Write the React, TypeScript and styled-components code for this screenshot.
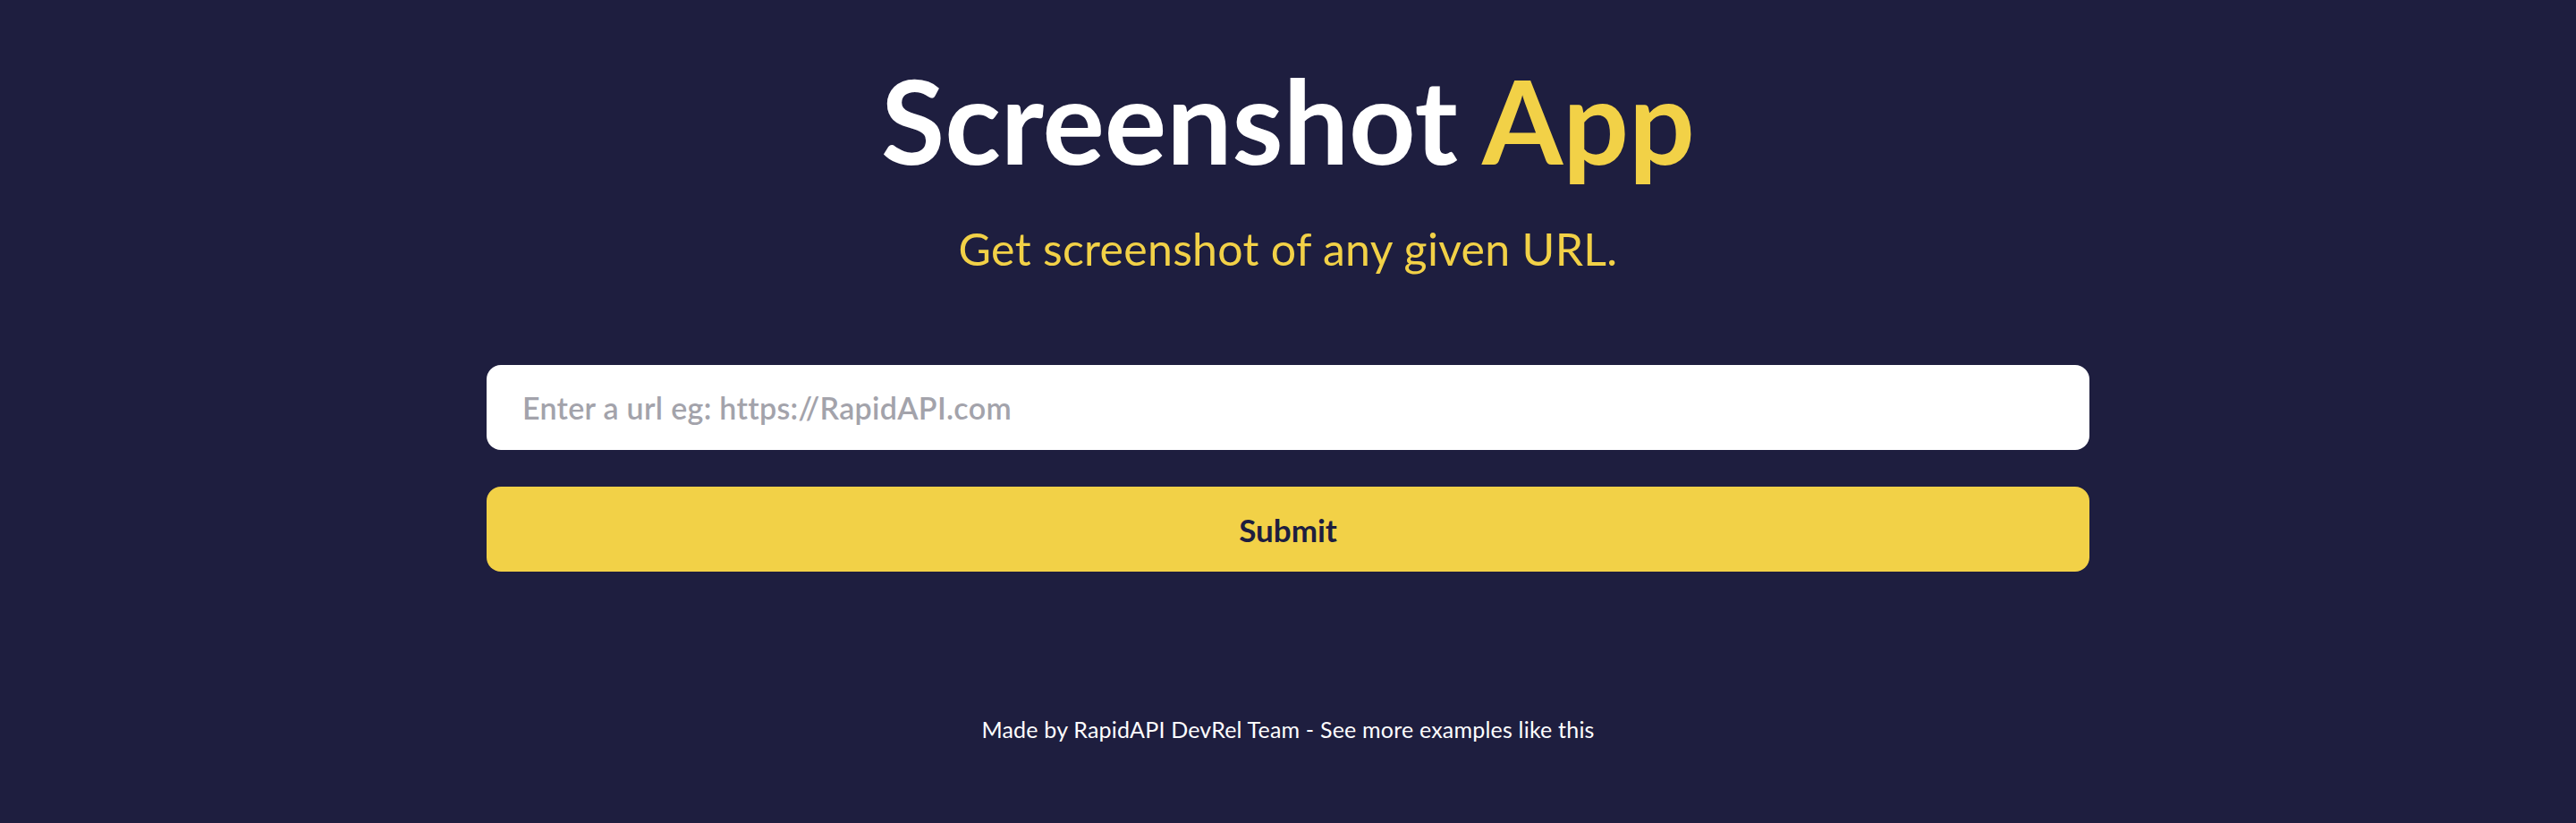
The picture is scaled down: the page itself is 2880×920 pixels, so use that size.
import styled, { createGlobalStyle } from 'styled-components';

const GlobalStyle = createGlobalStyle`
  html, body {
    margin: 0;
    padding: 0;
    background: #1e1e3f;
  }
  body {
    font-family: Lato, 'Noto Sans', sans-serif;
  }
`;

const Page = styled.div`
  min-height: 920px;
  display: flex;
  flex-direction: column;
  align-items: center;
  background: #1e1e3f;
`;

const Title = styled.h1`
  margin: 56px 0 0;
  font-size: 130px;
  line-height: 1.2;
  font-weight: 700;
  color: #ffffff;

  span {
    color: #f2d147;
  }
`;

const Subtitle = styled.p`
  margin: 36px 0 0;
  font-size: 50px;
  line-height: 1.2;
  font-weight: 400;
  color: #f2d147;
  letter-spacing: 0.3px;
`;

const Form = styled.form`
  width: 1792px;
  margin-top: 100px;
  display: flex;
  flex-direction: column;
  gap: 41px;
`;

const UrlInput = styled.input`
  box-sizing: border-box;
  width: 100%;
  height: 95px;
  padding: 0 40px;
  border: none;
  border-radius: 16px;
  background: #ffffff;
  font-family: inherit;
  font-size: 34px;
  font-weight: 600;
  letter-spacing: 0.3px;
  color: #1e1e3f;
  outline: none;

  &::placeholder {
    color: #a3a3ab;
  }
`;

const SubmitButton = styled.button`
  width: 100%;
  height: 95px;
  border: none;
  border-radius: 16px;
  background: #f2d147;
  font-family: inherit;
  font-size: 35px;
  font-weight: 700;
  color: #1e1e3f;
  cursor: pointer;
`;

const Footer = styled.footer`
  margin-top: 161px;
  font-size: 25px;
  line-height: 1.2;
  letter-spacing: 0.2px;
  color: #ffffff;
`;

const App = () => {
  return (
    <Page>
      <GlobalStyle />
      <Title>
        Screenshot <span>App</span>
      </Title>
      <Subtitle>Get screenshot of any given URL.</Subtitle>
      <Form onSubmit={(e) => e.preventDefault()}>
        <UrlInput placeholder="Enter a url eg: https://RapidAPI.com" />
        <SubmitButton type="submit">Submit</SubmitButton>
      </Form>
      <Footer>Made by RapidAPI DevRel Team - See more examples like this</Footer>
    </Page>
  );
};

export default App;
